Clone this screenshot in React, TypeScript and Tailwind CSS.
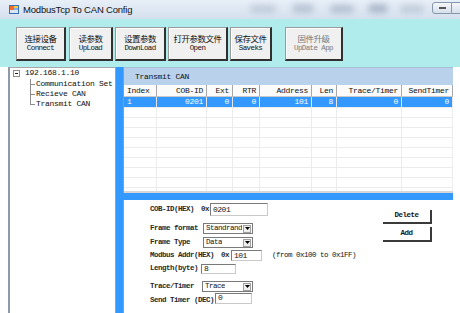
import React from "react";

const mono = "font-['Liberation_Mono','DejaVu_Sans_Mono',monospace]";
const cjk = "font-['Noto_Sans_CJK_SC','Noto_Sans_CJK_JP',sans-serif]";

// toolbar buttons, left to right
const toolButtons = [
  { cn: "连接设备", en: "Connect", box: "ml-[16px] w-[50px]" },
  { cn: "读参数", en: "UpLoad", box: "ml-[3px] w-[44px]" },
  { cn: "设置参数", en: "DownLoad", box: "ml-[2px] w-[51px]" },
  { cn: "打开参数文件", en: "Open", box: "ml-[2px] w-[60px]" },
  { cn: "保存文件", en: "Saveks", box: "ml-[2px] w-[42px]" },
  { cn: "固件升级", en: "UpDate App", box: "ml-[13px] w-[58px]", disabled: true },
];

const columns = [
  { name: "Index", w: "w-[33px]", left: true },
  { name: "COB-ID", w: "w-[50px]" },
  { name: "Ext", w: "w-[26px]" },
  { name: "RTR", w: "w-[27px]" },
  { name: "Address", w: "w-[52px]" },
  { name: "Len", w: "w-[25px]" },
  { name: "Trace/Timer", w: "w-[65px]" },
  { name: "SendTimer", w: "w-[51px]" },
];

const firstRow = ["1", "0201", "0", "0", "101", "8", "0", "0"];

function AppIcon() {
  return (
    <svg width="10" height="9" viewBox="0 0 10 9">
      <rect x="0" y="0" width="10" height="9" fill="#3b6fb6" />
      <rect x="1" y="1" width="4" height="4" fill="#f26b2a" />
      <rect x="5" y="1" width="4" height="2" fill="#f7c948" />
      <rect x="1" y="5" width="8" height="3" fill="#d9e6f5" />
      <rect x="5" y="3" width="4" height="2" fill="#7fb2e6" />
    </svg>
  );
}

function TitleBar() {
  return (
    <div className="relative flex h-[19px] items-center overflow-hidden bg-gradient-to-b from-[#e8eff8] to-[#d4e0ee] pl-[9px]">
      {/* blurred glass behind the caption */}
      <div className="absolute left-[250px] top-[5px] h-[8px] w-[26px] rounded-full bg-[#b4c0d0] opacity-70 blur-[3px]" />
      <div className="absolute left-[292px] top-[4px] h-[9px] w-[22px] rounded-full bg-[#a9b6c8] opacity-70 blur-[3px]" />
      <div className="absolute left-[330px] top-[5px] h-[8px] w-[24px] rounded-full bg-[#a9b6c8] opacity-80 blur-[3px]" />
      <div className="absolute left-[368px] top-[4px] h-[9px] w-[20px] rounded-full bg-[#9fadc1] opacity-80 blur-[3px]" />
      <div className="absolute left-[400px] top-[5px] h-[8px] w-[24px] rounded-full bg-[#b4c0d0] opacity-70 blur-[3px]" />
      <div className="relative">
        <AppIcon />
      </div>
      <span className="relative ml-[4px] font-['Liberation_Sans',Arial,sans-serif] text-[9.5px] leading-none tracking-[-0.2px] text-[#111]">
        ModbusTcp To CAN Config
      </span>
      <div className="relative ml-auto flex h-[14px] self-start">
        <div className="mt-[2px] flex h-[12px] w-[20px] items-center justify-center rounded-l-[3px] border border-[#8796ab] bg-gradient-to-b from-[#f4f7fb] to-[#d6dfeb]">
          <span className="h-[2px] w-[7px] border border-[#555] bg-white" />
        </div>
        <div className="mt-[2px] h-[12px] w-[8px] border-y border-[#8796ab] bg-gradient-to-b from-[#f4f7fb] to-[#d6dfeb]" />
      </div>
    </div>
  );
}

function Toolbar() {
  return (
    <div className="flex h-[48px] items-start bg-[#b1ecec] pt-[8px]">
      {toolButtons.map((b) => (
        <div
          key={b.en}
          className={`${b.box} flex h-[34px] flex-col items-center justify-center border border-t-[#9a9a9a] border-l-[#9a9a9a] border-r-2 border-b-2 border-r-[#303030] border-b-[#303030] bg-[#f0f0f0] pb-[2px] shadow-[inset_1px_1px_0_#ffffff] ${
            b.disabled ? "text-[#7a7a7a]" : "text-[#111]"
          }`}
        >
          <span className={`${cjk} text-[8.5px] leading-[10px] tracking-[-0.5px]`}>{b.cn}</span>
          <span className={`${mono} text-[7.5px] leading-[10px] tracking-[-0.6px]`}>{b.en}</span>
        </div>
      ))}
    </div>
  );
}

function Connector({ last }: { last?: boolean }) {
  return (
    <span className="relative h-full w-[6px]">
      <span className={`absolute left-0 top-0 w-px bg-[#8c8c8c] ${last ? "h-1/2" : "h-full"}`} />
      <span className="absolute left-0 top-1/2 h-px w-[5px] bg-[#8c8c8c]" />
    </span>
  );
}

function TreePanel() {
  const children = ["Communication Set", "Recieve CAN", "Transmit CAN"];
  return (
    <div className={`${mono} w-[108px] border-t border-r border-l-2 border-t-[#a8a8a8] border-r-[#a0a0a0] border-l-[#8e99a8] bg-white text-[8px] tracking-[-0.3px] text-[#111]`}>
      <div className="flex h-[10px] items-center pl-[3px]">
        <span className="flex h-[7px] w-[7px] items-center justify-center border border-[#8c8c8c]">
          <span className="h-px w-[3px] bg-[#222]" />
        </span>
        <span className="ml-[5px] leading-none">192.168.1.10</span>
      </div>
      <div className="mt-[1px]">
        {children.map((c, i) => (
          <div key={c} className="flex h-[10px] items-center pl-[20px]">
            <Connector last={i === children.length - 1} />
            <span className="leading-none whitespace-nowrap">{c}</span>
          </div>
        ))}
      </div>
    </div>
  );
}

function TablePanel() {
  return (
    <div className={`${mono} flex h-[126px] flex-col border-l border-[#9a9a9a] bg-white text-[8px] tracking-[-0.3px]`}>
      <div className="flex h-[18px] items-center border-t border-[#a9bfd8] bg-[#b9d1ea] pl-[11px] text-[#111]">Transmit CAN</div>
      <div className="flex h-[12px]">
        {columns.map((c) => (
          <div
            key={c.name}
            className={`${c.w} flex items-center border-r border-b border-r-[#a8a8a8] border-b-[#c8c8c8] bg-[#fbfbfb] text-[#111] ${
              c.left ? "justify-start pl-[3px]" : "justify-end pr-[3px]"
            }`}
          >
            {c.name}
          </div>
        ))}
      </div>
      <div className="flex-1 overflow-hidden">
        <div className="flex h-[10px] bg-[#3399ff] text-white">
          {columns.map((c, i) => (
            <div
              key={c.name}
              className={`${c.w} flex items-center border-r border-[#e6e6e6] leading-none ${
                c.left ? "justify-start pl-[3px]" : "justify-end pr-[3px]"
              }`}
            >
              {firstRow[i]}
            </div>
          ))}
        </div>
        {Array.from({ length: 9 }).map((_, r) => (
          <div key={r} className="flex h-[10px] border-t border-[#ececec]">
            {columns.map((c) => (
              <div key={c.name} className={`${c.w} border-r border-[#ececec]`} />
            ))}
          </div>
        ))}
      </div>
      <div className="h-[2px] bg-[#d6d6d6]" />
    </div>
  );
}

function Label({ w, children }: { w: string; children: React.ReactNode }) {
  return (
    <span className={`${w} whitespace-nowrap font-bold leading-none text-[#2a2a2a]`}>{children}</span>
  );
}

function TextBox({ w, h, value, top }: { w: string; h: string; value: string; top?: boolean }) {
  return (
    <div
      className={`${w} ${h} flex border border-t-[#7a7a7a] border-l-[#7a7a7a] border-r-[#c9c9c9] border-b-[#c9c9c9] bg-white pl-[2px] text-[8px] font-normal leading-none ${
        top ? "items-start" : "items-center"
      }`}
    >
      {value}
    </div>
  );
}

function Combo({ w, value }: { w: string; value: string }) {
  return (
    <div className={`${w} flex h-[11px] items-center justify-between border border-[#7a7a7a] bg-white pl-[2px] font-normal leading-none`}>
      <span className="overflow-hidden whitespace-nowrap">{value}</span>
      <span className="mr-px flex h-[8px] w-[8px] shrink-0 items-center justify-center border border-[#a0a0a0] bg-[#eeeeee]">
        <svg width="5" height="3" viewBox="0 0 5 3">
          <path d="M0 0h5L2.5 3z" fill="#000" />
        </svg>
      </span>
    </div>
  );
}

function FormPanel() {
  return (
    <div className={`${mono} mt-[7px] flex flex-1 border-l border-[#9a9a9a] bg-white text-[7.5px] tracking-[-0.5px] text-[#151515]`}>
      <div className="flex flex-col pl-[26px]">
        <div className="mt-[3px] flex h-[13px] items-center">
          <Label w="w-[51px]">COB-ID(HEX)</Label>
          <span className="w-[9px] font-bold leading-none text-[#2a2a2a]">0x</span>
          <TextBox w="w-[58px]" h="h-[13px]" value="0201" />
        </div>
        <div className="mt-[7px] flex h-[11px] items-center">
          <Label w="w-[53px]">Frame format</Label>
          <Combo w="w-[50px]" value="Standrand" />
        </div>
        <div className="mt-[3px] flex h-[11px] items-center">
          <Label w="w-[53px]">Frame Type</Label>
          <Combo w="w-[50px]" value="Data" />
        </div>
        <div className="mt-[2px] flex h-[11px] items-center">
          <Label w="w-[71px]">Modbus Addr(HEX)</Label>
          <span className="w-[10px] font-bold leading-none text-[#2a2a2a]">0x</span>
          <TextBox w="w-[31px]" h="h-[11px]" value="101" />
          <span className="ml-[10px] whitespace-nowrap leading-none">(from 0x100 to 0x1FF)</span>
        </div>
        <div className="mt-[3px] flex h-[10px] items-center">
          <Label w="w-[51px]">Length(byte)</Label>
          <TextBox w="w-[35px]" h="h-[10px]" value="8" />
        </div>
        <div className="mt-[7px] flex h-[11px] items-center">
          <Label w="w-[52px]">Trace/Timer</Label>
          <Combo w="w-[51px]" value="Trace" />
        </div>
        <div className="mt-px flex h-[11px] items-end">
          <Label w="w-[65px]">Send Timer (DEC)</Label>
          <TextBox w="w-[37px]" h="h-[11px]" value="0" top />
        </div>
      </div>
      <div className="ml-auto mr-[21px] flex flex-col pt-[10px]">
        <button className="flex h-[14px] w-[49px] items-center justify-center border-r-2 border-b-2 border-[#3a3a3a] bg-white font-bold leading-none">
          Delete
        </button>
        <button className="mt-[3px] flex h-[15px] w-[49px] items-center justify-center border-r-2 border-b-2 border-[#3a3a3a] bg-white font-bold leading-none">
          Add
        </button>
      </div>
    </div>
  );
}

export default function App() {
  return (
    <div className="flex h-[313px] w-[460px] flex-col overflow-hidden bg-white text-black">
      <TitleBar />
      <Toolbar />
      <div className="flex h-[246px]">
        <div className="w-[8px]" />
        <TreePanel />
        <div className="flex w-[337px] flex-col bg-[#3399ff] pl-[7px]">
          <TablePanel />
          <FormPanel />
        </div>
      </div>
    </div>
  );
}
